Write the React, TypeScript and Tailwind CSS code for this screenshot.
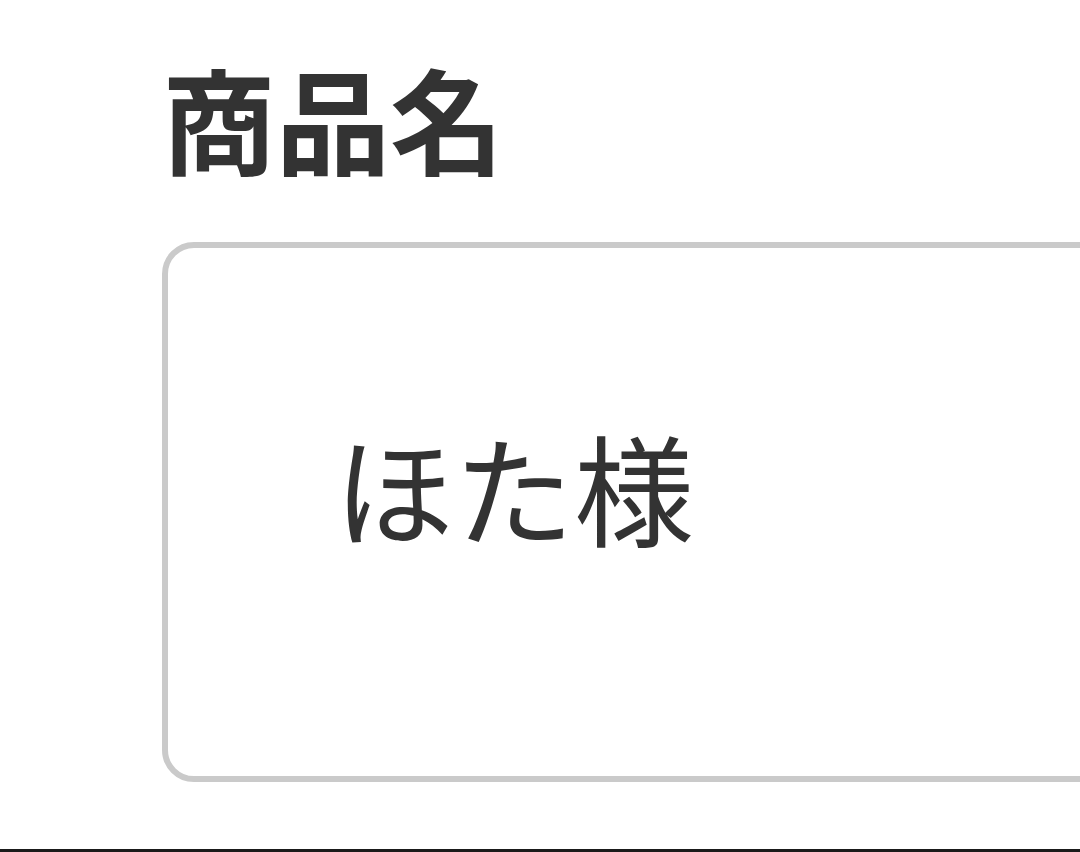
export default function App() {
  return (
    <div
      className="w-[1080px] h-[852px] overflow-hidden bg-white border-b-[3px] border-[#1a1a1a] pl-[162px] pt-[60px]"
      style={{ fontFamily: '"Noto Sans CJK JP", "Noto Sans", sans-serif' }}
    >
      <h1 className="text-[114px] leading-none font-semibold text-[#333333]">商品名</h1>
      <div className="mt-[68px] w-[1000px] h-[540px] border-[6px] border-[#cacaca] rounded-[32px] flex items-center pl-[166px] pb-[52px]">
        <span className="text-[120px] leading-none text-[#333333]">ほた様</span>
      </div>
    </div>
  );
}
